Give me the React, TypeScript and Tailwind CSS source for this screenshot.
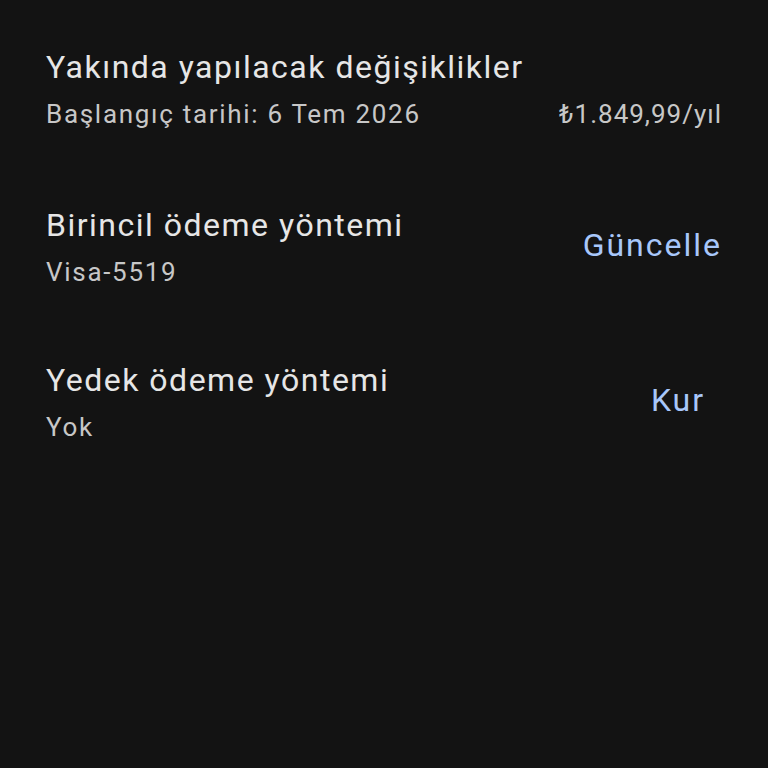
export default function App() {
  return (
    <div
      className="min-h-[768px] w-full bg-[#131313] px-[46px] pt-[44px]"
      style={{ fontFamily: "Roboto, 'Noto Sans', sans-serif" }}
    >
      {/* Upcoming changes */}
      <div className="flex flex-col">
        <div className="text-[32px] leading-[46px] tracking-[1.5px] text-[#e6e6e6]">Yakında yapılacak değişiklikler</div>
        <div className="mt-[1px] flex items-center justify-between text-[26px] leading-[46px] text-[#c7c7c7]">
          <span className="tracking-[1.7px]">Başlangıç tarihi: 6 Tem 2026</span>
          <span className="tracking-[1px]">₺1.849,99/yıl</span>
        </div>
      </div>

      {/* Primary payment */}
      <div className="mt-[65px] flex items-center justify-between">
        <div className="flex flex-col">
          <div className="text-[32px] leading-[46px] tracking-[1.5px] text-[#e6e6e6]">Birincil ödeme yöntemi</div>
          <div className="mt-[1px] text-[26px] leading-[46px] tracking-[1.7px] text-[#c7c7c7]">Visa-5519</div>
        </div>
        <button className="min-w-[88px] pb-[7px] text-center text-[32px] tracking-[2px] text-[#a8c7fa]">Güncelle</button>
      </div>

      {/* Backup payment */}
      <div className="mt-[62px] flex items-center justify-between">
        <div className="flex flex-col">
          <div className="text-[32px] leading-[46px] tracking-[1.5px] text-[#e6e6e6]">Yedek ödeme yöntemi</div>
          <div className="mt-[1px] text-[26px] leading-[46px] tracking-[1.7px] text-[#c7c7c7]">Yok</div>
        </div>
        <button className="min-w-[88px] pb-[7px] text-center text-[32px] tracking-[2px] text-[#a8c7fa]">Kur</button>
      </div>
    </div>
  );
}
